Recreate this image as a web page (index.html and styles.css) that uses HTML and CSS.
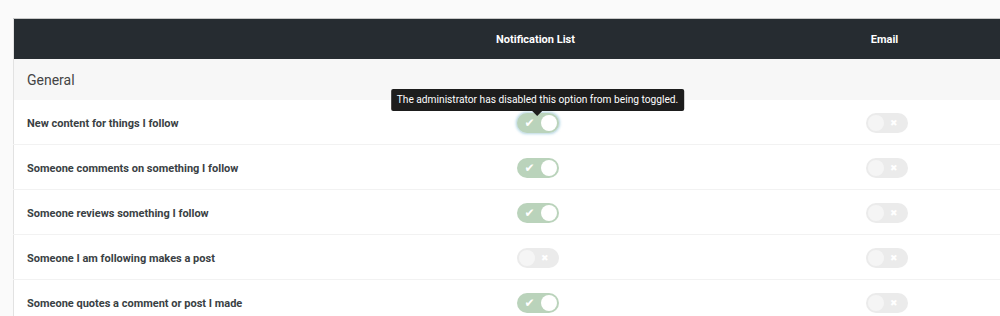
FILE: index.html
```html
<!DOCTYPE html>
<html lang="en">
<head>
    <meta charset="UTF-8">
    <title>Notification Settings</title>
    <link rel="stylesheet" href="styles.css">
</head>
<body>
    <div class="container">
        <table class="prefs">
            <thead>
                <tr>
                    <th class="label-col"></th>
                    <th class="opt-col">Notification List</th>
                    <th class="opt-col">Email</th>
                </tr>
            </thead>
            <tbody>
                <tr class="group">
                    <td colspan="3">General</td>
                </tr>
                <tr>
                    <td class="label">New content for things I follow</td>
                    <td class="opt">
                        <span class="tip-wrap">
                            <span class="tooltip">The administrator has disabled this option from being toggled.</span>
                            <span class="toggle on focused"><span class="mark">&#10004;</span><span class="knob"></span></span>
                        </span>
                    </td>
                    <td class="opt"><span class="toggle off"><span class="knob"></span><span class="mark">&#10006;</span></span></td>
                </tr>
                <tr>
                    <td class="label">Someone comments on something I follow</td>
                    <td class="opt"><span class="toggle on"><span class="mark">&#10004;</span><span class="knob"></span></span></td>
                    <td class="opt"><span class="toggle off"><span class="knob"></span><span class="mark">&#10006;</span></span></td>
                </tr>
                <tr>
                    <td class="label">Someone reviews something I follow</td>
                    <td class="opt"><span class="toggle on"><span class="mark">&#10004;</span><span class="knob"></span></span></td>
                    <td class="opt"><span class="toggle off"><span class="knob"></span><span class="mark">&#10006;</span></span></td>
                </tr>
                <tr>
                    <td class="label">Someone I am following makes a post</td>
                    <td class="opt"><span class="toggle off"><span class="knob"></span><span class="mark">&#10006;</span></span></td>
                    <td class="opt"><span class="toggle off"><span class="knob"></span><span class="mark">&#10006;</span></span></td>
                </tr>
                <tr>
                    <td class="label">Someone quotes a comment or post I made</td>
                    <td class="opt"><span class="toggle on"><span class="mark">&#10004;</span><span class="knob"></span></span></td>
                    <td class="opt"><span class="toggle off"><span class="knob"></span><span class="mark">&#10006;</span></span></td>
                </tr>
            </tbody>
        </table>
    </div>
</body>
</html>
```

FILE: styles.css
```css
body {
    font-family: Roboto, "Liberation Sans", sans-serif;
    background-color: #fafafa;
    margin: 0;
    padding: 18px 0 0 13px;
    overflow: hidden;
}
.container {
    width: 1060px;
}
table.prefs {
    width: 1046px;
    border-collapse: collapse;
    background: white;
    border-top: 1px solid #c8c8c8;
    border-left: 1px solid #e2e2e2;
    table-layout: fixed;
}
thead tr {
    background-color: #262c31;
    height: 40px;
}
th {
    color: white;
    font-size: 11px;
    font-weight: bold;
    text-align: center;
    padding: 2px 0 0 0;
}
th.label-col {
    width: 347px;
}
th.opt-col {
    width: 349px;
}
td {
    padding: 3px 0 0 0;
    height: 41px;
    text-align: center;
    border-bottom: 1px solid #f2f2f2;
}
td.opt {
    padding-left: 4px;
}
tr.group td {
    background-color: #f7f7f7;
    text-align: left;
    font-size: 14px;
    color: #444;
    padding: 2px 0 0 13px;
    height: 39px;
    border-bottom: none;
}
td.label {
    text-align: left;
    padding-left: 13px;
    font-size: 11px;
    font-weight: bold;
    color: #3a3f44;
}
.toggle {
    display: inline-flex;
    align-items: center;
    justify-content: space-between;
    width: 42px;
    height: 20px;
    border-radius: 10px;
    box-sizing: border-box;
    padding: 0 2px;
    vertical-align: middle;
}
.toggle.on {
    background-color: #bad3bb;
    padding-left: 8px;
}
.toggle.off {
    background-color: #ebebeb;
    padding-right: 10px;
}
.toggle.focused {
    box-shadow: 0 0 0 1px #cfe3ea, 0 0 2px 2px rgba(150, 200, 220, 0.35);
}
.knob {
    width: 16px;
    height: 16px;
    border-radius: 50%;
    background: white;
}
.toggle.off .knob {
    background: #f5f5f5;
}
.mark {
    font-family: "DejaVu Sans", sans-serif;
    color: white;
    font-size: 12px;
    line-height: 1;
}
.toggle.off .mark {
    font-size: 9px;
}
.tip-wrap {
    position: relative;
    display: inline-block;
}
.tooltip {
    position: absolute;
    bottom: 22px;
    left: 50%;
    transform: translateX(-50%);
    height: 22px;
    line-height: 22px;
    padding: 0 6px;
    background: #1d1d1d;
    color: white;
    font-size: 10.2px;
    border-radius: 2px;
    text-align: center;
    white-space: nowrap;
}
.tooltip::after {
    content: "";
    position: absolute;
    top: 22px;
    left: 50%;
    margin-left: -5px;
    border-left: 5px solid transparent;
    border-right: 5px solid transparent;
    border-top: 5px solid #1d1d1d;
}
```
